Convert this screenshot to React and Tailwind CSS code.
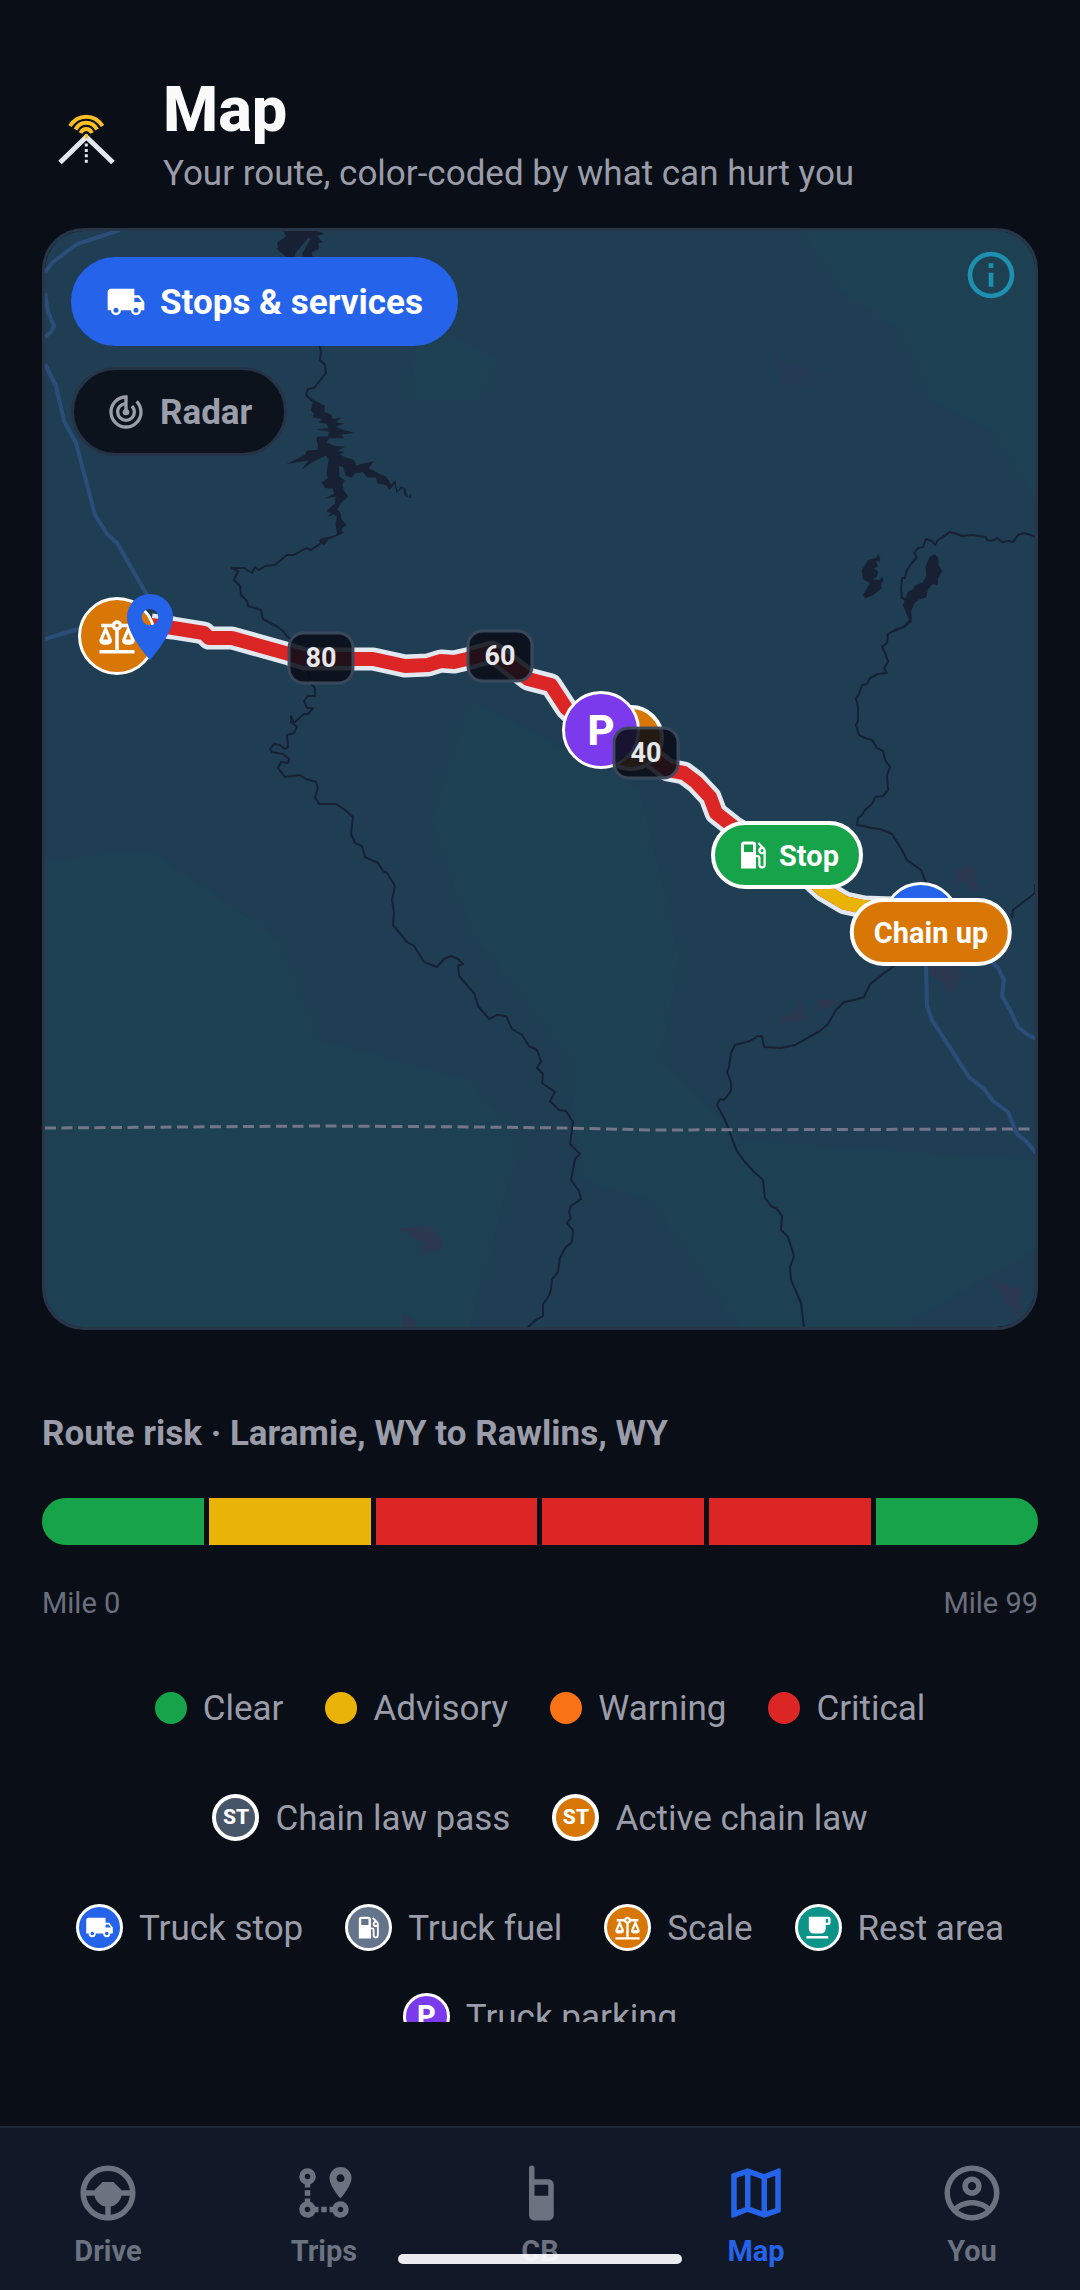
import React, { useState } from 'react';
import clsx from 'clsx';

const ICONS = {
  truck: 'M18 18.5A1.5 1.5 0 0 1 16.5 17A1.5 1.5 0 0 1 18 15.5A1.5 1.5 0 0 1 19.5 17A1.5 1.5 0 0 1 18 18.5M19.5 9.5L21.46 12H17V9.5M6 18.5A1.5 1.5 0 0 1 4.5 17A1.5 1.5 0 0 1 6 15.5A1.5 1.5 0 0 1 7.5 17A1.5 1.5 0 0 1 6 18.5M20 8H17V4H3C1.89 4 1 4.89 1 6V17H3A3 3 0 0 0 6 20A3 3 0 0 0 9 17H15A3 3 0 0 0 18 20A3 3 0 0 0 21 17H23V12L20 8Z',
  radar: 'M19.07 4.93L17.66 6.34C19.1 7.79 20 9.79 20 12A8 8 0 0 1 12 20A8 8 0 0 1 4 12C4 7.92 7.05 4.56 11 4.07V6.09C8.16 6.57 6 9.03 6 12A6 6 0 0 0 12 18A6 6 0 0 0 18 12C18 10.34 17.33 8.84 16.24 7.76L14.83 9.17C15.55 9.9 16 10.9 16 12A4 4 0 0 1 12 16A4 4 0 0 1 8 12C8 10.14 9.28 8.59 11 8.14V10.28C10.4 10.63 10 11.26 10 12A2 2 0 0 0 12 14A2 2 0 0 0 14 12C14 11.26 13.6 10.62 13 10.28V2H12A10 10 0 0 0 2 12A10 10 0 0 0 12 22A10 10 0 0 0 22 12C22 9.24 20.88 6.74 19.07 4.93Z',
  fuel: 'M18 10A1 1 0 0 1 17 9A1 1 0 0 1 18 8A1 1 0 0 1 19 9A1 1 0 0 1 18 10M12 10H6V5H12M19.77 7.23L19.78 7.22L16.06 3.5L15 4.56L17.11 6.67C16.17 7 15.5 7.93 15.5 9A2.5 2.5 0 0 0 18 11.5C18.36 11.5 18.69 11.42 19 11.29V18.5A1 1 0 0 1 18 19.5A1 1 0 0 1 17 18.5V14A2 2 0 0 0 15 12H14V5A2 2 0 0 0 12 3H6C4.89 3 4 3.89 4 5V21H14V13.5H15.5V18.5A2.5 2.5 0 0 0 18 21A2.5 2.5 0 0 0 20.5 18.5V9C20.5 8.31 20.22 7.68 19.77 7.23Z',
  scale: 'M12,3C10.73,3 9.6,3.8 9.18,5H3V7H4.95L2,14C1.53,16 3,17 5.5,17C8,17 9.56,16 9,14L6.05,7H9.17C9.5,7.85 10.15,8.5 11,8.83V20H2V22H22V20H13V8.82C13.85,8.5 14.5,7.85 14.82,7H17.95L15,14C14.53,16 16,17 18.5,17C21,17 22.56,16 22,14L19.05,7H21V5H14.83C14.4,3.8 13.27,3 12,3M12,5A1,1 0 0,1 13,6A1,1 0 0,1 12,7A1,1 0 0,1 11,6A1,1 0 0,1 12,5M5.5,10.25L7,14H4L5.5,10.25M18.5,10.25L20,14H17L18.5,10.25Z',
  coffee: 'M2,21H20V19H2M20,8H18V5H20M20,3H4V13A4,4 0 0,0 8,17H14A4,4 0 0,0 18,13V10H20A2,2 0 0,0 22,8V5C22,3.89 21.1,3 20,3Z',
  marker: 'M12,11.5A2.5,2.5 0 0,1 9.5,9A2.5,2.5 0 0,1 12,6.5A2.5,2.5 0 0,1 14.5,9A2.5,2.5 0 0,1 12,11.5M12,2A7,7 0 0,0 5,9C5,14.25 12,22 12,22C12,22 19,14.25 19,9A7,7 0 0,0 12,2Z',
  info: 'M11,9H13V7H11M12,20C7.59,20 4,16.41 4,12C4,7.59 7.59,4 12,4C16.41,4 20,7.59 20,12C20,16.41 16.41,20 12,20M12,2A10,10 0 0,0 2,12A10,10 0 0,0 12,22A10,10 0 0,0 22,12A10,10 0 0,0 12,2M11,17H13V11H11V17Z',
  steering: 'M13,19.92C14.8,19.7 16.35,18.95 17.65,17.65C18.95,16.35 19.7,14.8 19.92,13H16.92C16.7,14 16.24,14.84 15.54,15.54C14.84,16.24 14,16.7 13,16.92V19.92M10,8H14L17,11H19.92C19.67,9.05 18.79,7.38 17.27,6C15.76,4.66 14,4 12,4C10,4 8.24,4.66 6.73,6C5.21,7.38 4.33,9.05 4.08,11H7L10,8M11,19.92V16.92C10,16.7 9.16,16.24 8.46,15.54C7.76,14.84 7.3,14 7.08,13H4.08C4.3,14.77 5.05,16.3 6.35,17.6C7.65,18.9 9.2,19.67 11,19.92M12,2C14.75,2 17.1,3 19.05,4.95C21,6.9 22,9.25 22,12C22,14.75 21,17.1 19.05,19.05C17.1,21 14.75,22 12,22C9.25,22 6.9,21 4.95,19.05C3,17.1 2,14.75 2,12C2,9.25 3,6.9 4.95,4.95C6.9,3 9.25,2 12,2Z',
  path: 'M18,15A3,3 0 0,1 21,18A3,3 0 0,1 18,21C16.69,21 15.58,20.17 15.17,19H14V17H15.17C15.58,15.83 16.69,15 18,15M18,17A1,1 0 0,0 17,18A1,1 0 0,0 18,19A1,1 0 0,0 19,18A1,1 0 0,0 18,17M18,8A1.43,1.43 0 0,0 19.43,6.57C19.43,5.78 18.79,5.14 18,5.14C17.21,5.14 16.57,5.78 16.57,6.57A1.43,1.43 0 0,0 18,8M18,2.57A4,4 0 0,1 22,6.57C22,9.56 18,14 18,14C18,14 14,9.56 14,6.57A4,4 0 0,1 18,2.57M8.83,17H10V19H8.83C8.42,20.17 7.31,21 6,21A3,3 0 0,1 3,18C3,16.69 3.83,15.58 5,15.17V14H7V15.17C7.85,15.47 8.53,16.15 8.83,17M6,17A1,1 0 0,0 5,18A1,1 0 0,0 6,19A1,1 0 0,0 7,18A1,1 0 0,0 6,17M6,3A3,3 0 0,1 9,6C9,7.31 8.17,8.42 7,8.83V10H5V8.83C3.83,8.42 3,7.31 3,6A3,3 0 0,1 6,3M6,5A1,1 0 0,0 5,6A1,1 0 0,0 6,7A1,1 0 0,0 7,6A1,1 0 0,0 6,5M11,19V17H13V19H11M7,13H5V11H7V13Z',
  handheld: 'M9,2A1,1 0 0,0 8,3C8,8.67 8,14.33 8,20C8,21.11 8.89,22 10,22H15C16.11,22 17,21.11 17,20V9C17,7.89 16.11,7 15,7H10V3A1,1 0 0,0 9,2M10,9H15V13H10V9Z',
  map: 'M20.5,3L20.34,3.03L15,5.1L9,3L3.36,4.9C3.15,4.97 3,5.15 3,5.38V20.5A0.5,0.5 0 0,0 3.5,21L3.66,20.97L9,18.9L15,21L20.64,19.1C20.85,19.03 21,18.85 21,18.62V3.5A0.5,0.5 0 0,0 20.5,3M10,5.47L14,6.87V18.53L10,17.13V5.47M5,6.46L8,5.45V17.15L5,18.31V6.46M19,17.54L16,18.55V6.86L19,5.7V17.54Z',
  account: 'M12,2A10,10 0 0,0 2,12A10,10 0 0,0 12,22A10,10 0 0,0 22,12A10,10 0 0,0 12,2M7.07,18.28C7.5,17.38 10.12,16.5 12,16.5C13.88,16.5 16.5,17.38 16.93,18.28C15.57,19.36 13.86,20 12,20C10.14,20 8.43,19.36 7.07,18.28M18.36,16.83C16.93,15.09 13.46,14.5 12,14.5C10.54,14.5 7.07,15.09 5.64,16.83C4.62,15.5 4,13.82 4,12C4,7.59 7.59,4 12,4C16.41,4 20,7.59 20,12C20,13.82 19.38,15.5 18.36,16.83M12,6C10.06,6 8.5,7.56 8.5,9.5C8.5,11.44 10.06,13 12,13C13.94,13 15.5,11.44 15.5,9.5C15.5,7.56 13.94,6 12,6M12,11A1.5,1.5 0 0,1 10.5,9.5A1.5,1.5 0 0,1 12,8A1.5,1.5 0 0,1 13.5,9.5A1.5,1.5 0 0,1 12,11Z',
};

const Icon = ({ name, className }) => (
  <svg viewBox="0 0 24 24" fill="currentColor" aria-hidden="true" className={clsx('shrink-0', className)}>
    <path d={ICONS[name]} />
  </svg>
);

const Logo = () => (
  <svg viewBox="0 0 88 88" fill="none" aria-hidden="true" className="w-[88px] h-[88px] shrink-0">
    <path d="M18 71.5L44.3 46L71 71.5" stroke="#e2e8f0" strokeWidth="5" />
    <path d="M44.3 52.5V72" stroke="#e2e8f0" strokeWidth="3" strokeDasharray="3 2.4" />
    <g stroke="#fbbf24" strokeWidth="4">
      <path d="M28 35C36 22.5 52.5 22.5 60.5 35" />
      <path d="M33.5 38.5C38 29.5 50.5 29.5 55 38.5" />
      <path d="M38.5 42C41 36.5 47.5 36.5 50 42" />
      <path d="M44.3 43V47.5" strokeWidth="3" />
    </g>
  </svg>
);

// Visible window of the base map, in map units
const VIEW = { x: 45, y: 231, w: 990, h: 1096 };

const ROUTE = 'M151 625L173 628L204 633L209 638H232L289 654L305 659H373L405 666L428 665L441 661L454 662L467 659L492 652L501 658L528 679L551 685L566 708L582 723L640 748L668 770L684 773L696 782L710 797L716 813L735 828L790 860L823 890L845 903L864 907L920 909';
const ROUTE_ADVISORY = 'M800 868L823 890L845 903L864 907L920 909';

const HIGHWAYS = [
  'M120 230L77 244L53 262L45 272',
  'M45 293L48 312L54 326L51 332L45 337',
  'M45 364L56 386L64 421L76 443L95 515L107 534L117 543L147 595',
  'M45 639L78 629',
  'M926 960V965L927 1006L932 1020L969 1077L984 1089L993 1101L1008 1112L1017 1134L1026 1141L1036 1153',
  'M985 958L993 963L998 968L1004 980L1002 996L1009 1008L1018 1027L1028 1035L1036 1039',
];

const RIVERS = [
  'M318 340L321 352L320 360L325 365L326 373L314 388L308 389L306 395L312 401',
  'M324 541L311 550L306 548L294 555H287L275 565L265 566L259 570L255 567L252 573L244 568L232 568L238 571L234 580L240 586L241 595L247 601L248 606L261 610L263 619L278 627L284 632L286 635L290 639L296 650L308 670L312 685L315 688V696H308L304 701L307 708H313L308 714H304L294 723L291 716V722L297 727L294 733L287 735L288 747L285 749L280 745L274 744L270 749L272 752L283 754L289 759L288 763L281 762L278 768L285 777L300 775L306 779L316 782L318 788L315 797L319 804H336L345 810L353 817L351 834L355 843L362 846L365 857L378 863L383 871L387 873L395 886L392 900L394 912L393 925L398 931L407 942L414 946L424 962L437 967L444 959L451 956L458 959L463 964L458 966L459 976L474 993L478 1006L489 1019L497 1015L506 1016L512 1029L522 1035L529 1046L537 1050L541 1061L537 1068L543 1074L542 1083L555 1092L550 1101L559 1110L566 1111L573 1122L570 1144L580 1154L575 1159L571 1180L579 1191L581 1199L571 1206L569 1212L571 1218L567 1223L573 1230L572 1242L565 1248L560 1258L558 1272L552 1279L551 1289L549 1296L543 1304L543 1316L536 1320L527 1328',
  'M1036 537L1031 535L1024 533L1018 535L1013 542L1009 541L1002 542L997 538L992 541L987 540L986 537L972 535L962 536L957 534L950 532L938 540L935 545L932 541L926 539L923 547L918 548L914 553L917 557L911 564L907 570L905 578H902L901 589L902 598L906 600',
  'M893 631L888 634L887 643L882 647L886 655L888 662L884 668L887 673L878 674L870 678L867 684L862 685L859 694L856 699L858 706V721L856 725L859 735L865 738L872 740L877 748L883 751L885 760L890 767L887 775L888 790L883 796L875 797L873 802L871 805L865 810L862 815L858 818L857 825L864 826L871 828L880 829L892 834L902 850L907 860L921 870L926 882',
  'M894 966L883 974L870 984L864 997L854 1000L844 1002L836 1010L828 1024L820 1031L809 1037L795 1045L781 1048L764 1047L762 1036H758L750 1041L735 1045L731 1053L729 1067L727 1072L731 1082V1091L724 1100L720 1099L717 1105L724 1118L728 1127L732 1139L737 1151L744 1161L754 1172L763 1180L765 1198L771 1206L777 1209L782 1216L781 1230L788 1237L794 1256L790 1267L791 1280L801 1303L804 1328',
  'M1035 884V893L1026 900L1013 910L1012 918',
];

const BaseMap = () => (
  <svg
    viewBox={`${VIEW.x} ${VIEW.y} ${VIEW.w} ${VIEW.h}`}
    preserveAspectRatio="none"
    fill="none"
    aria-hidden="true"
    className="block w-full h-full"
  >
    <rect x="45" y="231" width="990" height="1096" fill="#203e53" />
    {/* forest */}
    <g fill="#1e4053">
      <path d="M800 231H1035V500L990 430L930 400L900 330L840 290Z" />
      <path d="M45 860L150 850L280 940L320 1040L470 1080L520 1140L470 1327H45Z" />
      <path d="M420 320L500 360L480 400L410 400Z" />
      <path d="M470 700L640 790L680 960L660 1060L740 1140L1035 1160V1250L900 1327H740L650 1200L580 1180L570 1060L470 930L430 820Z" />
    </g>
    {/* towns */}
    <g fill="#2b3850">
      <path d="M964 867L974 867L975 880L980 890L971 891L969 887L961 880L956 883L952 892L951 885L956 879L955 868L963 870Z" />
      <path d="M928 966H954L964 977L957 982L955 992H947L945 982L937 980L931 975Z" />
      <path d="M800 998L805 1020L781 1024V1017L795 1012Z" />
      <path d="M817 1000L836 999V1005L817 1011Z" />
      <path d="M990 1280L1020 1289L1022 1310L1017 1320L1012 1306L1004 1305L1003 1294Z" />
      <path d="M400 1229L428 1225L442 1239V1251L430 1250L419 1254L425 1244Z" />
      <path d="M403 1313L417 1322L413 1327H402Z" />
    </g>
    <path fill="#253b55" d="M773 350L788 365L797 362L803 367L825 373L812 377L817 392L803 379L782 386L777 362Z" />

    <g stroke="#172133" strokeWidth="2" strokeLinejoin="round">
      {RIVERS.map((d) => <path key={d} d={d} />)}
    </g>
    <g fill="#172133">
      <g transform="translate(30 220) scale(0.344 0.383)">
        <path d="M735 28L745 42L718 60L722 70L717 75L745 97H772L770 88L810 45L815 50L790 90L797 97H822L818 85L840 75L838 60L852 58L842 50L835 42L855 36L848 32L825 28Z" />
        <path d="M803 457L822 475L816 497L825 505L822 515L850 520L838 528L862 532L867 543L832 547L870 553L865 565H835L832 575L838 590L835 600L805 602L800 612L780 622L745 638L810 627L788 653L825 630L860 615L868 625L862 660L865 675L847 685L858 700L880 702L884 715L855 728L888 722L886 740L862 760L875 765L863 777L882 768L892 775L888 795L892 815L890 822L845 832L840 838L855 850L868 835L897 823L912 817L905 810L912 800L922 798L905 780L903 765L893 755L905 738L925 722L912 705L908 690L915 680L900 670L898 642L910 645L918 668L935 672L945 662L968 658L980 672H1005L1010 688L1035 692L1045 705L1060 690L1065 712L1085 700L1088 718L1108 728L1107 715L1100 725L1090 700L1078 695L1068 710L1062 678L1050 690L1035 670L1020 665L1000 655L985 648L1000 630L960 638L950 642L940 625L918 620L900 612L915 605L893 603L917 592L885 590L862 580L870 570H912L905 560L945 556L912 548L890 540L912 532L890 528L905 515L880 520L875 508L855 500L857 485L835 475L820 468Z" />
      </g>
      <g transform="translate(540 220) scale(0.333 0.383)">
        <path d="M1015 872L1022 882L1020 892L1010 890L1015 905L1003 910L1015 918L1012 932L997 938L1020 940L1025 932L1033 940L1025 950V962L1000 980L976 988L970 980L990 948L970 938L966 915L985 888L1010 882Z" />
        <path d="M1185 873L1195 880L1197 900L1208 918L1195 935V955L1180 950L1165 965L1160 985L1140 990L1125 1000L1115 1020L1117 1048L1095 1065L1058 1078L1062 1068L1090 1060L1108 1045L1090 1005L1105 970L1120 965L1125 955L1150 945L1160 930L1158 905L1170 880Z" />
      </g>
    </g>

    <path d="M45 1128L322 1126L480 1127L562 1128L650 1130L1035 1129" stroke="#75758a" strokeWidth="3" strokeDasharray="11 5.5" />
    <g stroke="#2a4e79" strokeWidth="4" strokeLinejoin="round">
      {HIGHWAYS.map((d) => <path key={d} d={d} />)}
    </g>

    <g strokeLinejoin="round">
      <path d={ROUTE} stroke="#e2e8f0" strokeWidth="23" />
      <path d={ROUTE} stroke="#dc2626" strokeWidth="14" />
      <path d={ROUTE_ADVISORY} stroke="#eab308" strokeWidth="14" />
    </g>
  </svg>
);

const Pin = ({ x, y, children }) => (
  <div
    className="absolute -translate-x-1/2 -translate-y-1/2"
    style={{ left: `${((x - VIEW.x) / VIEW.w) * 100}%`, top: `${((y - VIEW.y) / VIEW.h) * 100}%` }}
  >
    {children}
  </div>
);

const RoundPin = ({ className, children }) => (
  <div className={clsx('w-[78px] h-[78px] rounded-full border-3 border-white text-white flex items-center justify-center', className)}>
    {children}
  </div>
);

const PillPin = ({ className, icon, label }) => (
  <div className={clsx('h-[68px] px-5 rounded-full border-4 border-white text-white text-[29px] font-bold whitespace-nowrap flex items-center gap-2', className)}>
    {icon && <Icon name={icon} className="w-9 h-9" />}
    <span className="pt-1">{label}</span>
  </div>
);

const MILE_BADGES = [
  { mile: 80, x: 321, y: 658 },
  { mile: 60, x: 500, y: 656 },
  { mile: 40, x: 646, y: 753 },
];

const SEGMENTS = ['bg-[#16a34a]', 'bg-[#eab308]', 'bg-[#dc2626]', 'bg-[#dc2626]', 'bg-[#dc2626]', 'bg-[#16a34a]'];

const SEVERITIES = [
  { label: 'Clear', color: 'bg-[#16a34a]' },
  { label: 'Advisory', color: 'bg-[#eab308]' },
  { label: 'Warning', color: 'bg-[#f97316]' },
  { label: 'Critical', color: 'bg-[#dc2626]' },
];

const CHAIN_LAWS = [
  { label: 'Chain law pass', color: 'bg-[#475569]' },
  { label: 'Active chain law', color: 'bg-[#d97706]' },
];

const SERVICES = [
  { label: 'Truck stop', color: 'bg-[#2563eb]', icon: 'truck' },
  { label: 'Truck fuel', color: 'bg-[#64748b]', icon: 'fuel' },
  { label: 'Scale', color: 'bg-[#d97706]', icon: 'scale' },
  { label: 'Rest area', color: 'bg-[#0d9488]', icon: 'coffee' },
  { label: 'Truck parking', color: 'bg-[#7c3aed]' },
];

const TABS = [
  { label: 'Drive', icon: 'steering' },
  { label: 'Trips', icon: 'path' },
  { label: 'CB', icon: 'handheld' },
  { label: 'Map', icon: 'map' },
  { label: 'You', icon: 'account' },
];

const MapToggle = ({ icon, label, on, onClick }) => (
  <button
    type="button"
    aria-pressed={on}
    onClick={onClick}
    className={clsx(
      'h-[89px] px-8 rounded-full border-3 flex items-center gap-3.5 text-[35px] font-bold',
      on ? 'bg-[#2563eb] border-[#2563eb] text-white' : 'bg-[#0d131c] border-[#263347] text-[#9a9fab]'
    )}
  >
    <Icon name={icon} className="w-10 h-10" />
    <span className="pt-1">{label}</span>
  </button>
);

const LegendRow = ({ children }) => (
  <ul className="flex flex-wrap justify-center gap-[42px]">{children}</ul>
);

const LegendItem = ({ label, children }) => (
  <li className="h-[47px] flex items-center gap-4 text-[35px] text-[#9a9da9]">
    {children}
    <span className="pt-1">{label}</span>
  </li>
);

const App = () => {
  const [showStops, setShowStops] = useState(true);
  const [showRadar, setShowRadar] = useState(false);

  return (
    <div className="h-screen flex flex-col bg-[#0a0e17] font-['Roboto',sans-serif] overflow-hidden">
      <header className="shrink-0 px-[42px] pt-[74px] pb-8 flex items-center gap-[33px]">
        <Logo />
        <div>
          <h1 className="text-[63px] leading-[72px] font-extrabold text-[#fafafa]">Map</h1>
          <p className="mt-1.5 text-[35px] leading-[44px] text-[#9a9da9]">Your route, color-coded by what can hurt you</p>
        </div>
      </header>

      <main className="flex-1 min-h-0 mb-[104px] px-[42px] overflow-y-auto [scrollbar-width:none]">
        <section aria-label="Route map" className="relative aspect-[996/1102] rounded-[42px] border-3 border-[#293548] overflow-hidden">
          <BaseMap />

          <Pin x={631} y={738}>
            <div className="w-[66px] h-[66px] rounded-full border-4 border-white bg-[#d97706]" />
          </Pin>
          <Pin x={117} y={636}>
            <RoundPin className="bg-[#d97706]"><Icon name="scale" className="w-[42px] h-[42px]" /></RoundPin>
          </Pin>
          <Pin x={601} y={730}>
            <RoundPin className="bg-[#7c3aed] text-[42px] font-extrabold">P</RoundPin>
          </Pin>
          <Pin x={921} y={921}>
            <RoundPin className="bg-[#2563eb]"><Icon name="truck" className="w-[42px] h-[42px]" /></RoundPin>
          </Pin>
          <Pin x={150} y={627}>
            <Icon name="marker" className="w-[79px] h-[79px] text-[#2563eb]" />
          </Pin>
          {MILE_BADGES.map(({ mile, x, y }) => (
            <Pin key={mile} x={x} y={y}>
              <div className="w-[67px] h-[53px] rounded-2xl border-3 border-[#475569]/80 bg-[#0a0e17]/88 text-[27px] font-bold text-[#e5e7eb] flex items-center justify-center">
                {mile}
              </div>
            </Pin>
          ))}
          <Pin x={787} y={855}>
            <PillPin className="bg-[#16a34a]" icon="fuel" label="Stop" />
          </Pin>
          <Pin x={931} y={932}>
            <PillPin className="bg-[#d97706]" label="Chain up" />
          </Pin>

          <div className="absolute top-[26px] left-[26px] flex flex-col items-start gap-[21px]">
            <MapToggle icon="truck" label="Stops & services" on={showStops} onClick={() => setShowStops(!showStops)} />
            <MapToggle icon="radar" label="Radar" on={showRadar} onClick={() => setShowRadar(!showRadar)} />
          </div>
          <button type="button" aria-label="Map info" className="absolute top-4 right-4 text-[#1f8fb0]">
            <Icon name="info" className="w-14 h-14" />
          </button>
        </section>

        <h2 className="mt-[82px] text-[35px] leading-[44px] font-bold text-[#9a9da9]">
          Route risk · Laramie, WY to Rawlins, WY
        </h2>
        <div className="mt-[42px] h-[47px] flex gap-[5px] rounded-full overflow-hidden">
          {SEGMENTS.map((color, i) => (
            <div key={i} className={clsx('flex-1', color)} />
          ))}
        </div>
        <div className="mt-10 flex justify-between text-[29px] leading-9 text-[#6b6f7d]">
          <span>Mile 0</span>
          <span>Mile 99</span>
        </div>

        <div className="mt-[63px] flex flex-col gap-[63px]">
          <LegendRow>
            {SEVERITIES.map(({ label, color }) => (
              <LegendItem key={label} label={label}>
                <span className={clsx('w-8 h-8 rounded-full', color)} />
              </LegendItem>
            ))}
          </LegendRow>
          <LegendRow>
            {CHAIN_LAWS.map(({ label, color }) => (
              <LegendItem key={label} label={label}>
                <span className={clsx('w-[47px] h-[47px] rounded-full border-4 border-white text-white text-[21px] font-extrabold flex items-center justify-center', color)}>
                  ST
                </span>
              </LegendItem>
            ))}
          </LegendRow>
          <LegendRow>
            {SERVICES.map(({ label, color, icon }) => (
              <LegendItem key={label} label={label}>
                <span className={clsx('w-[47px] h-[47px] rounded-full border-3 border-white text-white text-[29px] font-extrabold flex items-center justify-center', color)}>
                  {icon ? <Icon name={icon} className="w-[29px] h-[29px]" /> : 'P'}
                </span>
              </LegendItem>
            ))}
          </LegendRow>
        </div>
      </main>

      <nav className="relative shrink-0 h-[164px] pt-8 bg-[#111827] border-t-2 border-[#1c2733] grid grid-cols-5 items-start">
        {TABS.map(({ label, icon }) => (
          <a
            key={label}
            href={`#${label.toLowerCase()}`}
            aria-current={label === 'Map' ? 'page' : undefined}
            className={clsx(
              'flex flex-col items-center gap-2 text-[29px] leading-[34px] font-bold',
              label === 'Map' ? 'text-[#2563eb]' : 'text-[#6b7280]'
            )}
          >
            <Icon name={icon} className="w-[66px] h-[66px]" />
            {label}
          </a>
        ))}
        {/* home indicator */}
        <div className="absolute bottom-[26px] left-1/2 -translate-x-1/2 w-[284px] h-[10px] rounded-full bg-white/92" />
      </nav>
    </div>
  );
};

export default App;
